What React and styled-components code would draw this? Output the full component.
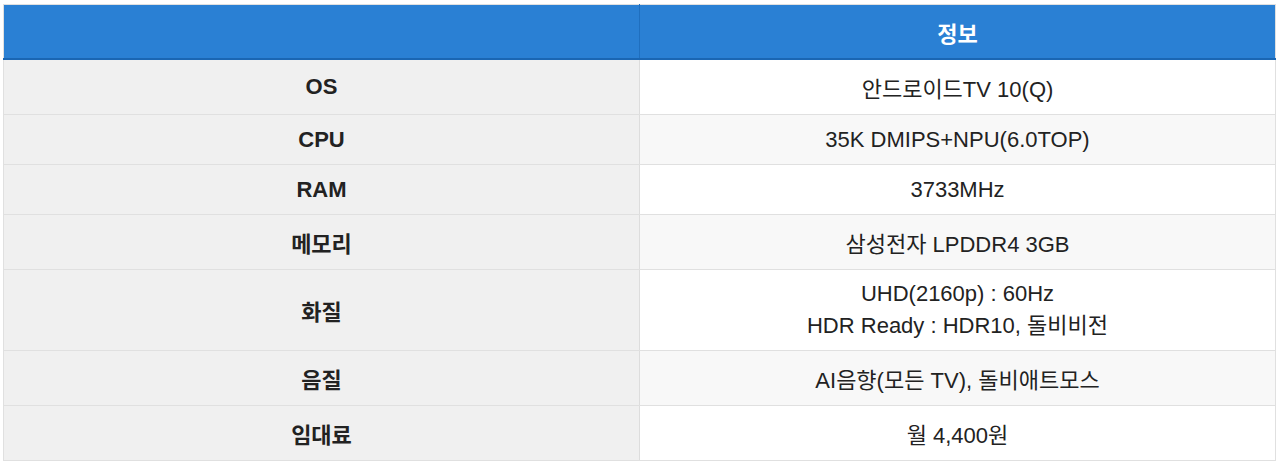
import React from 'react';
import styled, { createGlobalStyle } from 'styled-components';

const GlobalStyle = createGlobalStyle`
    body {
        margin: 0;
        background: #ffffff;
        font-family: "Liberation Sans", Arial, "Noto Sans CJK KR", sans-serif;
    }
`

const Wrapper = styled.div`
    padding: 4px 4px 0 3px;
`

const Table = styled.table`
    width: 100%;
    border-collapse: collapse;
    table-layout: fixed;
    border: 1px solid #e0e0e0;
    font-size: 22px;
    color: #222222;
`

const Row = styled.tr`
    height: 50px;
`

const HeadCell = styled.th`
    background-color: #2a80d4;
    color: #ffffff;
    font-weight: bold;
    padding: 10.5px 10px;
    border-left: 1px solid #1f6fbf;
    border-bottom: 2px solid #1a66b3;
    text-align: center;
    &:first-child {
        border-left: none;
    }
`

const LabelCell = styled.td`
    background-color: #f0f0f0;
    font-weight: bold;
    text-align: center;
    padding: 11px 10px;
    border-bottom: 1px solid #e0e0e0;
    border-right: 1px solid #dddddd;
`

const ValueCell = styled.td`
    background-color: ${props => props.striped ? '#f8f8f8' : '#ffffff'};
    text-align: center;
    padding: 11px 10px;
    border-bottom: 1px solid #e0e0e0;
`

const specs = [
    { label: 'OS', value: ['안드로이드TV 10(Q)'] },
    { label: 'CPU', value: ['35K DMIPS+NPU(6.0TOP)'] },
    { label: 'RAM', value: ['3733MHz'] },
    { label: '메모리', value: ['삼성전자 LPDDR4 3GB'] },
    { label: '화질', value: ['UHD(2160p) : 60Hz', 'HDR Ready : HDR10, 돌비비전'] },
    { label: '음질', value: ['AI음향(모든 TV), 돌비애트모스'] },
    { label: '임대료', value: ['월 4,400원'] },
]

const App = () => {
    return (
        <>
            <GlobalStyle />
            <Wrapper>
                <Table>
                    <thead>
                        <tr>
                            <HeadCell></HeadCell>
                            <HeadCell>정보</HeadCell>
                        </tr>
                    </thead>
                    <tbody>
                        {specs.map((spec, i) => (
                            <Row key={spec.label}>
                                <LabelCell>{spec.label}</LabelCell>
                                <ValueCell striped={i % 2 === 1}>
                                    {spec.value.map((line, j) => (
                                        <React.Fragment key={j}>
                                            {j > 0 ? <br /> : null}
                                            {line}
                                        </React.Fragment>
                                    ))}
                                </ValueCell>
                            </Row>
                        ))}
                    </tbody>
                </Table>
            </Wrapper>
        </>
    );
};

export default App;
